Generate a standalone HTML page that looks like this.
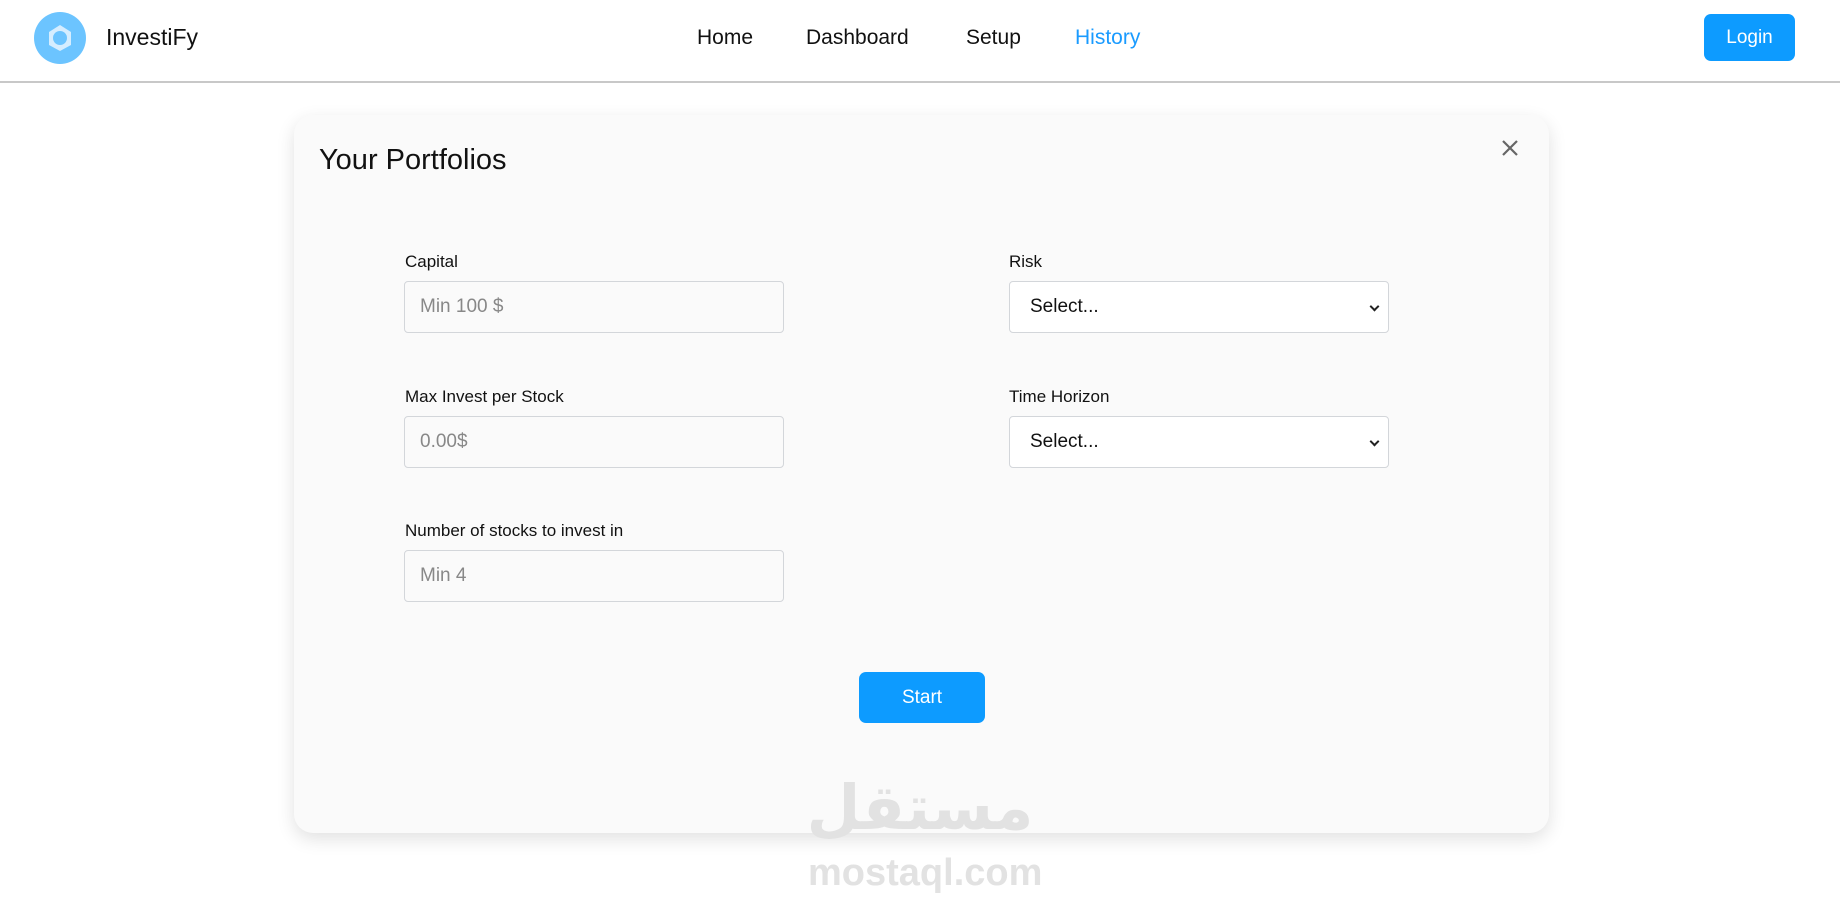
<!DOCTYPE html>
<html><head><meta charset="utf-8"><style>
*{box-sizing:border-box;margin:0;padding:0}
body{width:1840px;height:907px;background:#fff;font-family:"Liberation Sans","DejaVu Sans",sans-serif;position:relative;overflow:hidden;color:#111}
.nav{position:absolute;left:0;top:0;width:1840px;height:83px;border-bottom:2px solid #c8c8c8;background:#fff}
.logo{position:absolute;left:34px;top:12px;width:52px;height:52px;border-radius:50%;background:#6cc4ff}
.brand{position:absolute;left:106px;top:24px;font-size:23px}
.nl{position:absolute;top:26px;font-size:21px;color:#111}
.login{position:absolute;left:1704px;top:14px;width:91px;height:47px;background:#0d9bff;color:#fff;border-radius:7px;font-size:19px;text-align:center;line-height:47px}
.card{position:absolute;left:294px;top:115px;width:1255px;height:718px;background:#fafafa;border-radius:19px;box-shadow:0 6px 18px rgba(0,0,0,.12)}
.title{position:absolute;left:319px;top:144px;font-size:29px;color:#111}
.close{position:absolute;left:1500px;top:138px}
.lab{position:absolute;font-size:17px;color:#111}
.inp{position:absolute;width:380px;height:52px;border:1px solid #d3d6da;border-radius:4px;background:#fafafa;font-size:19px;color:#888;padding:14px 15px}
.sel{color:#111;background:#fff;padding-left:20px}
.sel:after{content:"";position:absolute;right:10px;top:21px;width:5px;height:5px;border-right:2px solid #222;border-bottom:2px solid #222;transform:rotate(45deg)}
.start{position:absolute;left:859px;top:672px;width:126px;height:51px;background:#0d9bff;color:#fff;border-radius:7px;font-size:19px;text-align:center;line-height:51px}
.wm{position:absolute;left:808px;top:852px;font-size:38px;font-weight:bold;color:#e2e2e2;font-family:"Liberation Sans",sans-serif}
.wa{position:absolute;left:805px;top:768px;width:230px;text-align:center;font-size:62px;font-weight:bold;color:#e2e2e2;font-family:"DejaVu Sans",sans-serif;line-height:80px}
</style></head><body>
<div class="nav">
<div class="logo"><svg width="52" height="52" viewBox="0 0 52 52"><polygon points="26,13 37,20 37,33 26,39 15,33 15,20" fill="#e8f5ff" opacity=".85"/><circle cx="26" cy="26" r="7" fill="#6cc4ff"/></svg></div>
<div class="brand">InvestiFy</div>
<div class="nl" style="left:697px">Home</div>
<div class="nl" style="left:806px">Dashboard</div>
<div class="nl" style="left:966px">Setup</div>
<div class="nl" style="left:1075px;color:#1a9bff">History</div>
<div class="login">Login</div>
</div>
<div class="card"></div>
<div class="title">Your Portfolios</div>
<svg class="close" width="20" height="20" viewBox="0 0 20 20"><path d="M3 3L17 17M17 3L3 17" stroke="#666" stroke-width="2.2"/></svg>
<div class="lab" style="left:405px;top:252px">Capital</div>
<div class="inp" style="left:404px;top:281px">Min 100 $</div>
<div class="lab" style="left:1009px;top:252px">Risk</div>
<div class="inp sel" style="left:1009px;top:281px">Select...</div>
<div class="lab" style="left:405px;top:387px">Max Invest per Stock</div>
<div class="inp" style="left:404px;top:416px">0.00$</div>
<div class="lab" style="left:1009px;top:387px">Time Horizon</div>
<div class="inp sel" style="left:1009px;top:416px">Select...</div>
<div class="lab" style="left:405px;top:521px">Number of stocks to invest in</div>
<div class="inp" style="left:404px;top:550px">Min 4</div>
<div class="start">Start</div>
<div class="wa">مستقل</div>
<div class="wm">mostaql.com</div>
</body></html>
